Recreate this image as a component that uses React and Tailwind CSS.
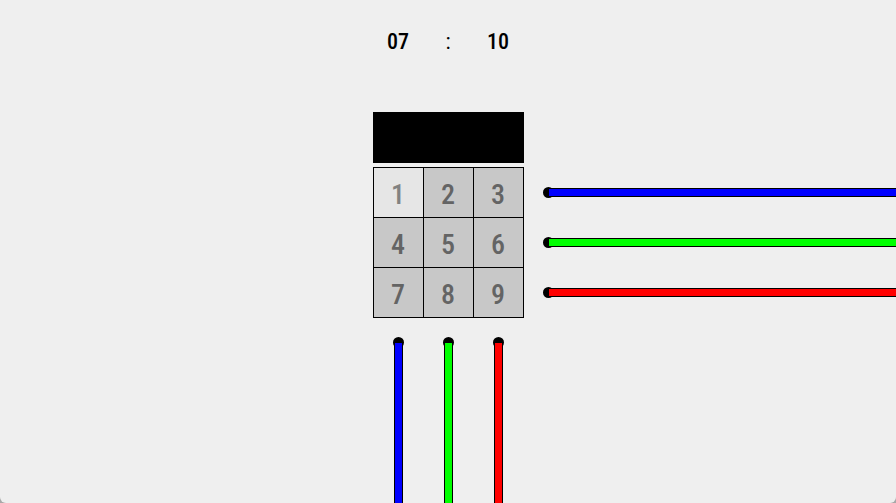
const KEYS = [1, 2, 3, 4, 5, 6, 7, 8, 9];
const WIRES = [
  { name: "blue", fill: "bg-[#0000ff]" },
  { name: "green", fill: "bg-[#00ff00]" },
  { name: "red", fill: "bg-[#ff0000]" },
];

function Key({ value, active }) {
  const tone = active ? "bg-[#e6e6e6] text-[#828282]" : "bg-[#c8c8c8] text-[#646464]";
  return (
    <button
      type="button"
      className={`flex h-[50px] w-[50px] items-center justify-center border-r border-b border-black pt-1 pr-px text-[28px] leading-8 font-medium ${tone}`}
    >
      {value}
    </button>
  );
}

function HorizontalWire({ fill }) {
  return (
    <div className="flex h-[11px] items-center">
      <span className="size-[11px] shrink-0 rounded-full bg-black" />
      <span className={`-ml-[5px] h-[9px] flex-1 border-y border-black ${fill}`} />
    </div>
  );
}

function VerticalWire({ fill }) {
  return (
    <div className="flex w-[11px] flex-col items-center">
      <span className="size-[11px] shrink-0 rounded-full bg-black" />
      <span className={`-mt-[5px] w-[9px] flex-1 border-x border-black ${fill}`} />
    </div>
  );
}

export default function App() {
  return (
    <div className="bg-[#a8a8a8] font-['Roboto_Condensed','Open_Sans_Condensed','Roboto',sans-serif]">
      <main className="flex min-h-screen flex-col overflow-hidden rounded-b-md bg-[#efefef]">
        <header className="flex justify-center pt-7">
          <time className="grid w-[150px] grid-cols-3 text-center text-[22px] leading-7 font-medium text-black">
            <span>07</span>
            <span className="font-normal">:</span>
            <span>10</span>
          </time>
        </header>

        <div className="flex justify-center pt-14 pl-px">
          <output aria-label="Code" className="block h-[51px] w-[151px] bg-black" />
        </div>

        <section className="grid grid-cols-[1fr_152px_1fr] pt-1">
          <div className="col-start-2 pl-px">
            <div className="grid grid-cols-3 border-t border-l border-black">
              {KEYS.map((k) => (
                <Key key={k} value={k} active={k === 1} />
              ))}
            </div>
          </div>
          <div className="flex flex-col gap-[39px] pt-5 pl-[19px]">
            {WIRES.map((w) => (
              <HorizontalWire key={w.name} fill={w.fill} />
            ))}
          </div>
        </section>

        <section className="flex flex-1 justify-center gap-[39px] pt-[19px] pl-px">
          {WIRES.map((w) => (
            <VerticalWire key={w.name} fill={w.fill} />
          ))}
        </section>
      </main>
    </div>
  );
}
